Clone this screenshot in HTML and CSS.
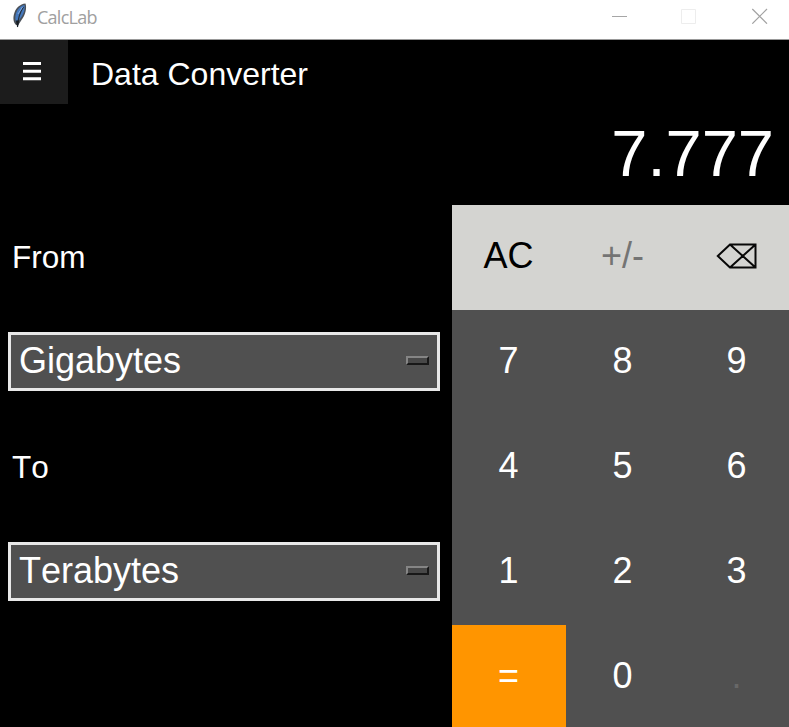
FILE: index.html
```html
<!DOCTYPE html>
<html lang="en">
<head>
<meta charset="utf-8">
<title>CalcLab</title>
<link rel="stylesheet" href="styles.css">
</head>
<body>
<div class="window">
  <header class="titlebar">
    <svg class="feather" width="16" height="26" viewBox="0 0 16 26">
      <path d="M5 22C2 19 1.800 14 3.500 9.500C5 5 9 1 14.500 .5C16 5 14.500 12 10.500 17L7 22.500Z" fill="#4a5058"/>
      <path d="M5 19C3.500 15 4.500 10.500 6.500 7C8.500 4 11 2.500 13.500 2C14.300 6.500 12.500 12 8.500 16.500Z" fill="#4478bd"/>
      <path d="M12.500 4C9 9 7 15 6.500 24" fill="none" stroke="#22303f" stroke-width="1.200"/>
      <path d="M5 17.500H8L7.500 21L6.500 24.500L5.500 21Z" fill="#171c22"/>
      <path d="M7 11L11.500 4" stroke="#85ace0" stroke-width="1"/>
    </svg>
    <span class="app-name">CalcLab</span>
    <svg class="controls" width="156" height="16" viewBox="0 0 156 16" fill="none">
      <path d="M0 8.500H15" stroke="#a6a6a6"/>
      <path d="M69.500 1.500H83.500V15.500H69.500Z" stroke="#ededed"/>
      <path d="M140.300 1L155 15.700M155 1L140.300 15.700" stroke="#a2a2a2" stroke-width="1.200"/>
    </svg>
  </header>
  <div class="toolbar">
    <button class="menu" aria-label="Menu">
      <svg width="18" height="19" viewBox="0 0 18 19"><path d="M0 1.600H18M0 9.200H18M0 16.800H18" stroke="#fff" stroke-width="3"/></svg>
    </button>
    <h1>Data Converter</h1>
  </div>
  <div class="display">7.777</div>
  <main>
    <section class="units">
      <div class="label">From</div>
      <div class="field"><div class="select"><span>Gigabytes</span><i class="indicator"></i></div></div>
      <div class="label">To</div>
      <div class="field"><div class="select"><span>Terabytes</span><i class="indicator"></i></div></div>
    </section>
    <section class="keypad">
      <button class="key light">AC</button>
      <button class="key light muted">+/-</button>
      <button class="key light" aria-label="Delete">
        <svg class="erase" width="42" height="28" viewBox="0 0 42 28" fill="none" stroke="#080808" stroke-width="2"><path d="M1.800 14L14 2.500H39.500V25.500H14ZM14 2.500L39.500 25.500M39.500 2.500L14 25.500"/></svg>
      </button>
      <button class="key">7</button><button class="key">8</button><button class="key">9</button>
      <button class="key">4</button><button class="key">5</button><button class="key">6</button>
      <button class="key">1</button><button class="key">2</button><button class="key">3</button>
      <button class="key equals">=</button><button class="key">0</button><button class="key dim">.</button>
    </section>
  </main>
</div>
</body>
</html>
```
FILE: styles.css
```css
* { box-sizing: border-box; }
body { margin: 0; background: #000; overflow: hidden; }
button { border: 0; padding: 0; font: inherit; color: inherit; }

.window {
  width: 789px;
  height: 727px;
  overflow: hidden;
  background: #000;
  color: #fff;
  font-family: "Liberation Sans", Arial, sans-serif;
  font-kerning: none;
}

.titlebar {
  display: flex;
  height: 40px;
  padding: 0 21px 0 11px;
  background: #fff;
  border-bottom: 1px solid #999;
}
.feather { margin-top: 3px; }
.app-name {
  margin: 5px auto 0 10px;
  font: 18px/25px "Open Sans", "Noto Sans", sans-serif;
  letter-spacing: -0.75px;
  color: #a0a0a0;
}
.controls { margin-top: 8px; }

.toolbar { display: flex; height: 64px; }
.menu {
  display: flex;
  justify-content: center;
  width: 68px;
  padding: 22px 4px 0 0;
  background: #1c1c1c;
}
h1 {
  margin: 0 0 0 23px;
  font-size: 32px;
  line-height: 68px;
  font-weight: 400;
}

.display {
  height: 101px;
  padding-right: 15px;
  font-size: 65px;
  line-height: 99px;
  text-align: right;
}

main { display: flex; height: 522px; overflow: hidden; }
.units { flex: none; width: 452px; }
.label {
  height: 105px;
  padding-left: 12px;
  font-size: 31.5px;
  line-height: 105px;
}
.field { height: 105px; padding: 22px 12px 0 8px; }
.select {
  display: flex;
  align-items: center;
  justify-content: space-between;
  height: 59px;
  padding: 0 8px 2px;
  border: 3px solid #e8e8e8;
  background: #505050;
  font-size: 36px;
  line-height: 51px;
}
.indicator {
  width: 23px;
  height: 9px;
  border: 2px solid;
  border-color: #858585 #181818 #181818 #858585;
  background: #484848;
}

.keypad {
  display: grid;
  flex: none;
  grid-template-columns: repeat(3, 114px);
  grid-auto-rows: 105px;
}
.key {
  padding: 0 1px 4px 0;
  background: #505050;
  font-size: 36px;
  text-align: center;
}
.light { background: #d4d4d1; color: #000; }
.muted { color: #747474; }
.equals { background: #ff9500; }
.dim { color: #686868; }
.erase { display: block; margin: 0 auto; }
```
